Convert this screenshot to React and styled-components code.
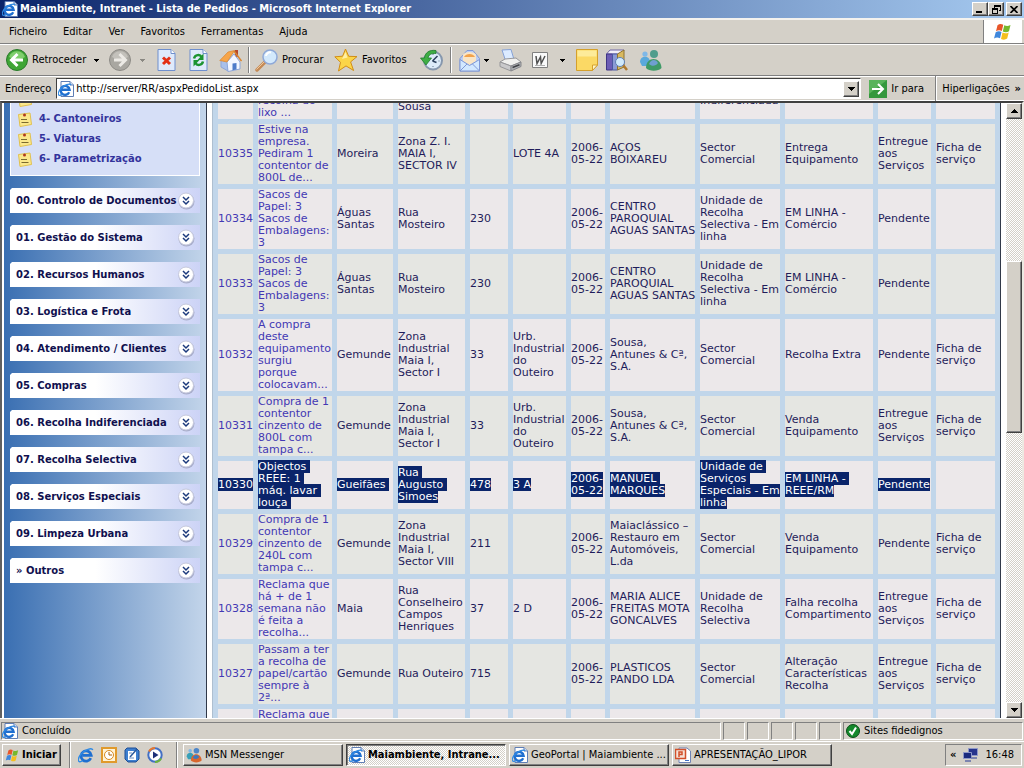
import { useLayoutEffect, useRef } from "react";
import styled, { createGlobalStyle, css } from "styled-components";

const GlobalStyle = createGlobalStyle`
  * {
    box-sizing: border-box;
  }

  body {
    margin: 0;
    background: #d4d0c8;
    color: #000;
    font: 11px/14px "DejaVu Sans Condensed", "DejaVu Sans", sans-serif;
  }

  button,
  input {
    margin: 0;
    padding: 0;
    border: 0;
    background: none;
    color: inherit;
    font: inherit;
  }

  svg {
    display: block;
    flex: none;
  }
`;

const raised = css`
  border: 1px solid;
  border-color: #fff #404040 #404040 #fff;
  box-shadow: inset -1px -1px 0 #808080;
  background: #d4d0c8;
`;

const sunken = css`
  border: 1px solid;
  border-color: #808080 #fff #fff #808080;
`;

const dither = css`
  background: repeating-conic-gradient(#fff 0 25%, #d4d0c8 0 50%) 0 0 / 2px 2px;
`;

const Window = styled.div`
  display: flex;
  flex-direction: column;
  height: 100vh;
  overflow: hidden;
`;

const TitleBar = styled.header`
  flex: none;
  display: flex;
  align-items: center;
  gap: 2px;
  height: 18px;
  padding: 0 2px;
  background: linear-gradient(to right, #0a246a, #a6caf0);
  color: #fff;
`;

const Title = styled.h1`
  flex: 1;
  margin: 0;
  font-size: 11px;
  font-weight: bold;
  white-space: nowrap;
`;

const CaptionButtons = styled.div`
  display: flex;
`;

const CaptionButton = styled.button`
  ${raised}
  display: flex;
  align-items: center;
  justify-content: center;
  width: 16px;
  height: 14px;
  margin-left: ${({ $apart }) => ($apart ? "2px" : "0")};
`;

const MenuBar = styled.nav`
  flex: none;
  display: flex;
  align-items: stretch;
  height: 26px;
  border-top: 2px solid #f4f2ee;
  border-bottom: 1px solid #808080;
  padding-right: 2px;
`;

const MenuItem = styled.button`
  padding: 0 8px;
  white-space: nowrap;
`;

const MenuItems = styled.div`
  flex: 1;
  display: flex;
  padding-left: 1px;
`;

const WindowsLogo = styled.div`
  display: flex;
  align-items: center;
  justify-content: center;
  width: 39px;
  border-left: 1px solid #808080;
  background: #fff;
`;

const Toolbar = styled.div`
  flex: none;
  display: flex;
  align-items: center;
  gap: 3px;
  height: 32px;
  padding-left: 4px;
  border-top: 1px solid #fff;
  border-bottom: 1px solid #808080;
`;

const ToolButton = styled.button`
  flex: none;
  display: flex;
  align-items: center;
  justify-content: ${({ $start }) => ($start ? "flex-start" : "center")};
  gap: ${({ $gap }) => $gap || 4}px;
  width: ${({ $width }) => $width || 29}px;
  height: 28px;
  padding-left: ${({ $start }) => ($start ? "2px" : "0")};
  white-space: nowrap;
`;

const ToolLabel = styled.span`
  padding-right: 4px;
`;

const Separator = styled.div`
  flex: none;
  width: 2px;
  height: 26px;
  border-left: 1px solid #808080;
  border-right: 1px solid #fff;
`;

const AddressBar = styled.form`
  flex: none;
  display: flex;
  align-items: center;
  gap: 5px;
  height: 25px;
  padding: 0 3px 0 5px;
  border-top: 1px solid #fff;
  border-bottom: 1px solid #fff;
`;

const AddressBox = styled.div`
  flex: 1;
  display: flex;
  align-items: center;
  gap: 2px;
  height: 21px;
  padding: 0 1px;
  border: 1px solid;
  border-color: #404040 #fff #fff #404040;
  background: #fff;
`;

const AddressInput = styled.input`
  flex: 1;
  height: 17px;
  outline: none;
`;

const SmallButton = styled.button`
  ${raised}
  flex: none;
  display: flex;
  align-items: center;
  justify-content: center;
  width: 16px;
  height: 16px;
`;

const GoButton = styled.button`
  display: flex;
  align-items: center;
  gap: 4px;
  width: 64px;
  padding-left: 3px;
  white-space: nowrap;
`;

const LinksButton = styled.button`
  display: flex;
  align-items: center;
  gap: 5px;
  white-space: nowrap;
`;

const Overflow = styled.span`
  font-weight: bold;
`;

const Body = styled.div`
  flex: 1;
  min-height: 0;
  display: flex;
  border-top: 2px solid #404040;
  border-left: 2px solid #606060;
  border-right: 2px solid #ece9e2;
`;

const Viewport = styled.div`
  flex: 1;
  min-width: 0;
  display: flex;
  align-items: flex-start;
  overflow: hidden;
  padding: 0 5px 0 2px;
  background: #fff;
`;

const Sidebar = styled.aside`
  flex: none;
  display: flex;
  flex-direction: column;
  align-self: stretch;
  gap: 12px;
  width: 203px;
  min-height: 700px;
  padding: 0 6px;
  border-right: 1px solid #303848;
  background: linear-gradient(to right, #3a6fb2, #c3d5ea);
`;

const SubMenu = styled.ul`
  margin: 0;
  padding: 35px 7px 6px;
  border: 1px solid #fff;
  border-top: 0;
  background: #d6dff7;
  list-style: none;
`;

const SubMenuLink = styled.a`
  display: flex;
  align-items: center;
  gap: 7px;
  height: 20px;
  color: #33339c;
  font: bold 10px/20px "DejaVu Sans", sans-serif;
  text-decoration: none;
  white-space: nowrap;
`;

const MenuGroup = styled.button`
  display: flex;
  align-items: center;
  justify-content: space-between;
  width: 100%;
  height: 25px;
  padding: 0 5px 0 6px;
  background: linear-gradient(to right, #fff 45%, #ccd3f6);
  clip-path: polygon(2px 0, 100% 0, 100% 100%, 0 100%, 0 2px);
  color: #10104e;
  font: bold 10px/12px "DejaVu Sans", sans-serif;
  white-space: nowrap;
`;

const Main = styled.main`
  flex: 1;
  margin-left: 5px;
  border-left: 1px solid #aebfd0;
  border-right: 1px solid #303848;
  background: #c1d6ea;
`;

const OrdersTable = styled.table`
  width: 100%;
  table-layout: fixed;
  border-collapse: separate;
  border-spacing: 5px;
  color: #1f1c5a;
  font: 11px/12px "DejaVu Sans", sans-serif;
`;

const Row = styled.tr`
  background: #ece8ea;

  &:nth-child(even) {
    background: #e5e6e2;
  }
`;

const Cell = styled.td`
  height: 48px;
  padding: 0;
  vertical-align: middle;
  white-space: pre;
`;

const CellLink = styled.a`
  color: #4338b4;
  text-decoration: none;
`;

const Selected = styled.span`
  background: #0a246a;
  color: #fff;
`;

const ScrollBar = styled.div`
  ${dither}
  flex: none;
  display: flex;
  flex-direction: column;
  width: 16px;
`;

const ScrollSpace = styled.div`
  flex: ${({ $share }) => $share};
`;

const ScrollThumb = styled.div`
  ${raised}
  flex: 171;
`;

const StatusBar = styled.footer`
  flex: none;
  display: flex;
  align-items: stretch;
  gap: 2px;
  height: 23px;
  padding: 3px 1px 1px;
  border-top: 1px solid #fff;
`;

const StatusPane = styled.div`
  ${sunken}
  flex: ${({ $grow }) => ($grow ? "1" : "none")};
  display: flex;
  align-items: center;
  gap: 4px;
  width: ${({ $width }) => $width || 22}px;
  padding-left: ${({ $grow }) => ($grow ? "0" : "2px")};
  white-space: nowrap;
`;

const TaskBar = styled.footer`
  flex: none;
  display: flex;
  align-items: center;
  height: 27px;
  padding: 0 2px;
  border-top: 1px solid #fff;
`;

const StartButton = styled.button`
  ${raised}
  display: flex;
  align-items: center;
  gap: 2px;
  width: 59px;
  height: 22px;
  padding-left: 2px;
  font-weight: bold;
`;

const QuickLaunch = styled.div`
  display: flex;
  align-items: center;
  gap: 7px;
  margin: 0 13px 0 8px;
`;

const QuickButton = styled.button`
  width: 16px;
  height: 16px;
`;

const Tasks = styled.div`
  flex: 1;
  display: flex;
  gap: 3px;
  margin-left: 5px;
`;

const TaskButton = styled.button`
  ${raised}
  display: flex;
  align-items: center;
  gap: 3px;
  width: 160px;
  height: 22px;
  padding: 0 2px;
  text-align: left;

  ${({ $active }) =>
    $active &&
    css`
      ${dither}
      border-color: #404040 #fff #fff #404040;
      box-shadow: inset 1px 1px 0 #808080;
      font-weight: bold;
    `}
`;

const TaskLabel = styled.span`
  white-space: nowrap;
`;

const Tray = styled.div`
  ${sunken}
  display: flex;
  align-items: center;
  justify-content: space-between;
  width: 77px;
  height: 22px;
  padding: 0 7px 0 4px;
`;

function Arrow({ up, color = "#000" }) {
  return (
    <svg width="7" height="4" shapeRendering="crispEdges">
      <path
        d={up ? "M3 0h1v1h1v1h1v1h1v1H0V3h1V2h1V1h1z" : "M0 0h7v1H6v1H5v1H4v1H3V3H2V2H1V1H0z"}
        fill={color}
      />
    </svg>
  );
}

function DropArrow({ color = "#000" }) {
  return (
    <svg width="5" height="3" shapeRendering="crispEdges">
      <path d="M0 0h5v1H4v1H3v1H2V2H1V1H0z" fill={color} />
    </svg>
  );
}

function IeGlyph() {
  return (
    <>
      <path
        d="M12.200 10.800A4.500 4.500 0 1 1 12.600 8.300H5"
        fill="none"
        stroke="#1f6fd0"
        strokeWidth="2.400"
      />
      <path
        d="M14 3.600C13 1.200 7 3.300 3.300 7.700.8 10.800.6 14 2.800 13.900c.7 0 1.600-.4 2.300-.9"
        fill="none"
        stroke="#2f8ae4"
        strokeWidth="1.200"
      />
    </>
  );
}

function IePageIcon() {
  return (
    <svg width="16" height="16" viewBox="0 0 16 16">
      <path d="M3 .5h9l3.500 3.500v11.500H3z" fill="#fff" stroke="#5f7eb5" />
      <path d="M12 .5V4h3.500" fill="#cfdcf2" stroke="#5f7eb5" />
      <g transform="translate(-1 .5)">
        <IeGlyph />
      </g>
    </svg>
  );
}

function IeIcon() {
  return (
    <svg width="16" height="16" viewBox="1 1 14 14">
      <IeGlyph />
    </svg>
  );
}

function FlagIcon({ size }) {
  return (
    <svg width={size} height={size} viewBox="0 0 20 20">
      <path d="M4.500 3.200c2-1.600 3.800-1.500 5.800-.4L8.800 9C7 8 5 8 3 9.300z" fill="#e8562a" />
      <path d="M11.300 3.300c2 1 4 1 6.200-.3L16 9.300c-2 1.300-4 1.300-6.200.2z" fill="#77b82c" />
      <path d="M2.700 10.300c2-1.300 4-1.300 5.800-.3L7 16.300c-2-1-4-1-6 .3z" fill="#3f87dc" />
      <path d="M9.500 10.600c2 1 4.200 1 6.200-.2l-1.500 6.200c-2 1.500-4.200 1.400-6.200.4z" fill="#f5bf1e" />
    </svg>
  );
}

function BackIcon() {
  return (
    <svg width="22" height="22" viewBox="0 0 22 22">
      <circle cx="11" cy="11" r="10.500" fill="#3fa535" stroke="#2a7a2a" />
      <path d="M3 8a8.500 8.500 0 0 1 16 0c-5 3-11 3-16 0z" fill="#7fce6d" />
      <path d="M11.500 5 5.500 11l6 6M6 11h11" fill="none" stroke="#fff" strokeWidth="3" />
    </svg>
  );
}

function ForwardIcon() {
  return (
    <svg width="22" height="22" viewBox="0 0 22 22">
      <circle cx="11" cy="11" r="10.500" fill="#a9a7a1" stroke="#8d8b86" />
      <path d="M3 8a8.500 8.500 0 0 1 16 0c-5 3-11 3-16 0z" fill="#c3c1bb" />
      <path d="M10.500 5l6 6-6 6M16 11H5" fill="none" stroke="#eceae5" strokeWidth="3" />
    </svg>
  );
}

function PageShape() {
  return (
    <>
      <path d="M1 .5h13l4 4v17H1z" fill="#dfeafb" stroke="#6f8fce" />
      <path d="M14 .5v4h4" fill="#fff" stroke="#6f8fce" />
    </>
  );
}

function StopIcon() {
  return (
    <svg width="19" height="22" viewBox="0 0 19 22">
      <PageShape />
      <path d="M6 8.500l7 6.500M13 8.500L6 15" stroke="#e33016" strokeWidth="3" />
    </svg>
  );
}

function RefreshIcon() {
  return (
    <svg width="19" height="22" viewBox="0 0 19 22">
      <PageShape />
      <path d="M5 9.500C6 5.500 11 5 12.500 8M14 12.500c-1 4-6 4.500-7.500 1.500" fill="none" stroke="#1d9432" strokeWidth="2.500" />
      <path d="M14.500 4.500V11H8.500zM4.500 17.500V11h6z" fill="#1d9432" />
    </svg>
  );
}

function HomeIcon() {
  return (
    <svg width="23" height="23" viewBox="0 0 23 23">
      <path d="M16 1h3v7h-3z" fill="#b5482d" />
      <path d="M2 11l7 1.500V22l-7-4z" fill="#a9c0ea" stroke="#8ea6d8" />
      <path d="M8 13l7-8 6 8v7l-12 2.500z" fill="#f4f7ff" stroke="#8ea6d8" />
      <path d="M.8 11.500L9 3l6.500-1.500L8 13z" fill="#f7a549" stroke="#d98530" strokeWidth=".7" />
      <path d="M15 2l7.500 10" stroke="#d98530" strokeWidth="1.500" />
      <path d="M13.500 14.500l4-.5v6.500l-4 .8z" fill="#4f7cc9" />
    </svg>
  );
}

function SearchIcon() {
  return (
    <svg width="23" height="23" viewBox="0 0 23 23">
      <path d="M2 21l8-8" stroke="#c58a55" strokeWidth="3.500" strokeLinecap="round" />
      <path d="M1.500 20.500l8-8" stroke="#eec79a" strokeWidth="1" />
      <circle cx="15" cy="8" r="7" fill="#d3e9fc" stroke="#8fa9d8" strokeWidth="1.500" />
      <path d="M11 7a4 4 0 0 1 5-3.500" fill="none" stroke="#fff" strokeWidth="2" />
    </svg>
  );
}

function StarIcon() {
  return (
    <svg width="24" height="24" viewBox="0 0 24 24">
      <path
        d="M11.500 1l3.200 7.300 8.300.3-6.400 5.300 3 8.600-7.600-4.600L4.500 23l2-8.700L.8 8.800l7.800-.6z"
        fill="#fbd548"
        stroke="#d18d17"
        strokeLinejoin="round"
      />
      <path d="M11.500 4l2 5.500L8 11z" fill="#fff0a6" />
    </svg>
  );
}

function HistoryIcon() {
  return (
    <svg width="23" height="22" viewBox="0 0 23 22">
      <circle cx="13" cy="11.500" r="9" fill="#dcebf9" stroke="#8697ad" strokeWidth="2" />
      <path d="M13 5v1M19.500 12h-1M13 18v-1" stroke="#64788f" />
      <path d="M12.500 12l5-5M12.500 12l4 1.500" stroke="#2a3f5c" strokeWidth="1.500" />
      <path d="M16 1.500C9 .5 5 4 4.500 9H.5L6 16l5.500-7H8c.5-3 3-5 8-4.500z" fill="#3fae45" stroke="#227c30" strokeWidth=".8" />
    </svg>
  );
}

function MailIcon() {
  return (
    <svg width="21" height="23" viewBox="0 0 21 23">
      <path d="M1 9.500L8 1.500h6l6.500 8V22H1z" fill="#b9cdf5" stroke="#8098d4" />
      <path d="M4 12V5.500C6 2 15 2 17 5.500V12l-6.500 4z" fill="#f9e5c6" />
      <path d="M5 8c2-4 9-4 11 0z" fill="#f2a24b" />
      <path d="M1 10.500l9.500 6 10-6V22H1z" fill="#d2e8ff" stroke="#8098d4" />
      <path d="M1 22l7-7M20.500 22l-7-7" stroke="#8098d4" />
    </svg>
  );
}

function PrinterIcon() {
  return (
    <svg width="23" height="23" viewBox="0 0 23 23">
      <path d="M3 1l9-.5 3 10-8.500 1z" fill="#dcebff" stroke="#86a2d6" />
      <path d="M1 13l5-3 11-1 5 4-10 4z" fill="#f0f0ee" stroke="#97979a" />
      <path d="M1 13l11 4v5L1 17.500z" fill="#c9c9cb" stroke="#97979a" />
      <path d="M12 17l10-4v4.500L12 22z" fill="#aeb0b4" stroke="#85868a" />
      <path d="M13.500 18.500l7-2.800" stroke="#3f4146" strokeWidth="1.500" />
    </svg>
  );
}

function WordIcon() {
  return (
    <svg width="16" height="16" viewBox="0 0 16 16">
      <path d="M.5.5h15v15H.5z" fill="#fafafa" stroke="#808080" />
      <path d="M4 4l1 7.500L8.500 5l.7 6.500L13 4" fill="none" stroke="#505050" strokeWidth="1.500" />
      <path d="M3 13.500h10" stroke="#b0b0b0" />
    </svg>
  );
}

function NoteIcon() {
  return (
    <svg width="22" height="22" viewBox="0 0 22 22">
      <path d="M.5.500h21V16l-5 5.500H.5z" fill="#fbd965" stroke="#d4a02c" />
      <path d="M1.500 1.500h19v6h-19z" fill="#fdeb9a" />
      <path d="M21.500 16h-5v5.500z" fill="#fff6c8" stroke="#d4a02c" />
    </svg>
  );
}

function BooksIcon() {
  return (
    <svg width="22" height="22" viewBox="0 0 22 22">
      <path d="M.5 5L4 1h14l-2 4z" fill="#f2f0fa" stroke="#7068a8" />
      <path d="M.5 5h6v16h-6z" fill="#6c5db5" stroke="#3f3585" />
      <path d="M6.500 5h5v16h-5z" fill="#8b9bd6" stroke="#4a58a0" />
      <path d="M11.500 5L18 1v17l-6.500 3z" fill="#d9b95f" stroke="#8e7330" />
      <path d="M17 16l4 5" stroke="#b07a2e" strokeWidth="2.500" />
      <circle cx="14" cy="13" r="4.500" fill="#cfe9fb" stroke="#5f7fb4" />
    </svg>
  );
}

function MessengerIcon({ small }) {
  return (
    <svg width={small ? 16 : 23} height={small ? 16 : 22} viewBox="0 0 23 22">
      <circle cx="6" cy="5" r="2.600" fill="#7fb8e8" />
      <path d="M1 13c0-7 10-7 10 0v4H3z" fill={small ? "#38a0b8" : "#5aa9dc"} />
      <circle cx="15" cy="5" r="4" fill={small ? "#4d86c9" : "#4f9d8c"} />
      <path d="M7 19c0-12 15-12 15.500 0-3 3.500-12.500 3.500-15.500 0z" fill={small ? "#d9672e" : "#3f9a67"} />
      <path d="M10 15c2-5 7-5 9-1-2 3-6 4-9 1z" fill={small ? "#3c78c0" : "#6f9fd0"} />
    </svg>
  );
}

function GoIcon() {
  return (
    <svg width="18" height="18" viewBox="0 0 18 18">
      <path d="M0 0h18v18H0z" fill="#35983d" />
      <path d="M0 0h18L0 14z" fill="#58b35a" />
      <path d="M9 4l5 5-5 5M13.500 9H3" fill="none" stroke="#fff" strokeWidth="2" />
    </svg>
  );
}

function ClipNoteIcon() {
  return (
    <svg width="14" height="15" viewBox="0 0 14 15">
      <path d="M.5 2.500L12 1l1.500 11.500L2 14.500z" fill="#fbe88c" stroke="#e0c050" />
      <path d="M3 7.500h6M3.500 10.500h7" stroke="#7a6a30" />
      <circle cx="6.500" cy="3" r="1.500" fill="#b0391f" />
    </svg>
  );
}

function ExpandIcon() {
  return (
    <svg width="18" height="18" viewBox="0 0 18 18">
      <circle cx="9.500" cy="9.500" r="8" fill="#a9aecb" />
      <circle cx="9" cy="8.500" r="7.500" fill="#fff" stroke="#c6c9dd" />
      <path d="M6 5l3 3 3-3M6 9l3 3 3-3" fill="none" stroke="#1c3a7c" strokeWidth="1.500" />
    </svg>
  );
}

function CheckIcon() {
  return (
    <svg width="14" height="14" viewBox="0 0 14 14">
      <circle cx="7" cy="7" r="6.500" fill="#14892c" stroke="#0b4d18" />
      <path d="M3.500 7l2.500 3 4-6.500" fill="none" stroke="#fff" strokeWidth="2" />
    </svg>
  );
}

function ClockIcon() {
  return (
    <svg width="16" height="16" viewBox="0 0 16 16">
      <path d="M1 1h14v14H1z" fill="#fff3d6" stroke="#e09a2c" strokeWidth="2" />
      <circle cx="8" cy="8" r="4.500" fill="#fff" stroke="#d98a1e" />
      <path d="M8 5v3h3" fill="none" stroke="#a8620c" />
    </svg>
  );
}

function DesktopIcon() {
  return (
    <svg width="16" height="16" viewBox="0 0 16 16">
      <path d="M1 3l2-2h9l3 3v8l-3 3H4l-3-3z" fill="#3d7fd0" stroke="#1f4f94" />
      <path d="M4 4h8v9H4z" fill="#fff" />
      <path d="M6 10l7-8" stroke="#2c5a9c" strokeWidth="1.500" />
      <path d="M5 6h3M5 11h5" stroke="#6e8fc0" />
    </svg>
  );
}

function MediaIcon() {
  return (
    <svg width="16" height="16" viewBox="0 0 16 16">
      <circle cx="8" cy="8" r="6.700" fill="#fff" stroke="#4370c4" strokeWidth="2" />
      <path d="M2 4.500A7 7 0 0 1 8 1" fill="none" stroke="#e8772c" strokeWidth="2" />
      <path d="M14 11.500A7 7 0 0 1 8 15" fill="none" stroke="#6cb33c" strokeWidth="2" />
      <path d="M6 4.500L11.500 8 6 11.500z" fill="#1c2f78" />
    </svg>
  );
}

function SlidesIcon() {
  return (
    <svg width="16" height="16" viewBox="0 0 16 16">
      <path d="M4 1h8l3.500 3v11.500H4z" fill="#fff" stroke="#6f83b5" />
      <path d="M.5 2.500h10v9H.5z" fill="#f6e3d8" stroke="#d2502a" strokeWidth="1.500" />
      <path d="M4 10V5h3v2.500H4" fill="none" stroke="#d2502a" strokeWidth="1.500" />
      <path d="M10 13.500h4" stroke="#4370c4" />
    </svg>
  );
}

function NetworkIcon() {
  return (
    <svg width="15" height="15" viewBox="0 0 15 15">
      <path d="M5.500.5h9v7h-9z" fill="#26348c" stroke="#8f98c8" />
      <path d="M.5 4.500h8v6h-8z" fill="#1b2a7e" stroke="#8f98c8" />
      <path d="M2 13h6M8 10h6" stroke="#7b84b0" strokeWidth="2" />
    </svg>
  );
}

const menus = ["Ficheiro", "Editar", "Ver", "Favoritos", "Ferramentas", "Ajuda"];

const subMenu = ["", "4- Cantoneiros", "5- Viaturas", "6- Parametrização"];

const menuGroups = [
  "00. Controlo de Documentos",
  "01. Gestão do Sistema",
  "02. Recursos Humanos",
  "03. Logística e Frota",
  "04. Atendimento / Clientes",
  "05. Compras",
  "06. Recolha Indiferenciada",
  "07. Recolha Selectiva",
  "08. Serviços Especiais",
  "09. Limpeza Urbana",
  "» Outros",
];

// the last column takes what the window leaves over
const columnWidths = [35, 74, 56, 67, 38, 53, 34, 85, 80, 88, 53];

const date = "2006-\n05-22";
const file = "Ficha de\nserviço";
const delivered = "Entregue\naos\nServiços";
const commercial = "Sector\nComercial";
const online = "Unidade de\nRecolha\nSelectiva - Em\nlinha";

const orders = [
  ["", "\n\n\nrecolha do\nlixo ...", "", "\n\n\nSousa", "", "", "", "", "\n\nIndiferenciada", "", "", ""],
  ["10335", "Estive na\nempresa.\nPediram 1\ncontentor de\n800L de...", "Moreira", "Zona Z. I.\nMAIA I,\nSECTOR IV", "", "LOTE 4A", date, "AÇOS\nBOIXAREU", commercial, "Entrega\nEquipamento", delivered, file],
  ["10334", "Sacos de\nPapel: 3\nSacos de\nEmbalagens:\n3", "Águas\nSantas", "Rua\nMosteiro", "230", "", date, "CENTRO\nPAROQUIAL\nAGUAS SANTAS", online, "EM LINHA -\nComércio", "Pendente", ""],
  ["10333", "Sacos de\nPapel: 3\nSacos de\nEmbalagens:\n3", "Águas\nSantas", "Rua\nMosteiro", "230", "", date, "CENTRO\nPAROQUIAL\nAGUAS SANTAS", online, "EM LINHA -\nComércio", "Pendente", ""],
  ["10332", "A compra\ndeste\nequipamento\nsurgiu\nporque\ncolocavam...", "Gemunde", "Zona\nIndustrial\nMaia I,\nSector I", "33", "Urb.\nIndustrial\ndo\nOuteiro", date, "Sousa,\nAntunes & Cª,\nS.A.", commercial, "Recolha Extra", "Pendente", file],
  ["10331", "Compra de 1\ncontentor\ncinzento de\n800L com\ntampa c...", "Gemunde", "Zona\nIndustrial\nMaia I,\nSector I", "33", "Urb.\nIndustrial\ndo\nOuteiro", date, "Sousa,\nAntunes & Cª,\nS.A.", commercial, "Venda\nEquipamento", delivered, file],
  ["10330", "Objectos \nREEE: 1 \nmáq. lavar \nlouça ", "Gueifães ", "Rua \nAugusto \nSimoes", "478", "3 A", date, "MANUEL \nMARQUES", "Unidade de \nServiços \nEspeciais - Em\nlinha", "EM LINHA - \nREEE/RM", "Pendente", ""],
  ["10329", "Compra de 1\ncontentor\ncinzento de\n240L com\ntampa c...", "Gemunde", "Zona\nIndustrial\nMaia I,\nSector VIII", "211", "", date, "Maiaclássico –\nRestauro em\nAutomóveis,\nL.da", commercial, "Venda\nEquipamento", "Pendente", file],
  ["10328", "Reclama que\nhá + de 1\nsemana não\né feita a\nrecolha...", "Maia", "Rua\nConselheiro\nCampos\nHenriques", "37", "2 D", date, "MARIA ALICE\nFREITAS MOTA\nGONCALVES", "Unidade de\nRecolha\nSelectiva", "Falha recolha\nCompartimento", delivered, file],
  ["10327", "Passam a ter\na recolha de\npapel/cartão\nsempre à\n2ª...", "Gemunde", "Rua Outeiro", "715", "", date, "PLASTICOS\nPANDO LDA", commercial, "Alteração\nCaracterísticas\nRecolha", delivered, file],
  ["", "Reclama que\n\n\n\n", "", "", "", "", "", "", "", "", "", ""],
];

const selectedOrder = "10330";

function CellContent({ text, link, selected }) {
  if (selected) return <Selected>{text}</Selected>;
  if (link && text) return <CellLink href="#">{text}</CellLink>;
  return text;
}

function Orders() {
  return (
    <OrdersTable>
      <colgroup>
        {columnWidths.map((width, index) => (
          <col key={index} width={width} />
        ))}
        <col />
      </colgroup>
      <tbody>
        {orders.map((order, rowIndex) => (
          <Row key={rowIndex}>
            {order.map((text, index) => (
              <Cell key={index}>
                <CellContent
                  text={text}
                  link={index < 2}
                  selected={order[0] === selectedOrder && text !== ""}
                />
              </Cell>
            ))}
          </Row>
        ))}
      </tbody>
    </OrdersTable>
  );
}

export default function App() {
  const viewport = useRef(null);

  useLayoutEffect(() => {
    viewport.current.scrollTop = 49;
  }, []);

  return (
    <>
      <GlobalStyle />
      <Window>
        <TitleBar>
          <IePageIcon />
          <Title>Maiambiente, Intranet - Lista de Pedidos - Microsoft Internet Explorer</Title>
          <CaptionButtons>
            <CaptionButton aria-label="Minimizar">
              <svg width="8" height="8" shapeRendering="crispEdges">
                <path d="M0 6h6v2H0z" />
              </svg>
            </CaptionButton>
            <CaptionButton aria-label="Restaurar">
              <svg width="9" height="9" shapeRendering="crispEdges">
                <path d="M2 0h7v6H7V5h1V2H3v1H2zM0 3h6v6H0zm1 2v3h4V5z" fillRule="evenodd" />
              </svg>
            </CaptionButton>
            <CaptionButton $apart aria-label="Fechar">
              <svg width="8" height="7">
                <path d="M0.500 0l7 7M7.500 0l-7 7" stroke="#000" strokeWidth="1.700" />
              </svg>
            </CaptionButton>
          </CaptionButtons>
        </TitleBar>

        <MenuBar>
          <MenuItems>
            {menus.map((menu) => (
              <MenuItem key={menu}>{menu}</MenuItem>
            ))}
          </MenuItems>
          <WindowsLogo>
            <FlagIcon size={20} />
          </WindowsLogo>
        </MenuBar>

        <Toolbar>
          <ToolButton $width={100} $start>
            <BackIcon />
            <ToolLabel>Retroceder</ToolLabel>
            <DropArrow />
          </ToolButton>
          <ToolButton $width={42} $gap={9} $start aria-label="Avançar">
            <ForwardIcon />
            <DropArrow color="#8a8882" />
          </ToolButton>
          <ToolButton aria-label="Parar">
            <StopIcon />
          </ToolButton>
          <ToolButton aria-label="Actualizar">
            <RefreshIcon />
          </ToolButton>
          <ToolButton aria-label="Página inicial">
            <HomeIcon />
          </ToolButton>
          <Separator />
          <ToolButton $width={76} $start>
            <SearchIcon />
            <ToolLabel>Procurar</ToolLabel>
          </ToolButton>
          <ToolButton $width={80} $start>
            <StarIcon />
            <ToolLabel>Favoritos</ToolLabel>
          </ToolButton>
          <ToolButton $width={32} aria-label="Histórico">
            <HistoryIcon />
          </ToolButton>
          <Separator />
          <ToolButton $width={38} aria-label="Correio">
            <MailIcon />
            <DropArrow />
          </ToolButton>
          <ToolButton $width={28} aria-label="Imprimir">
            <PrinterIcon />
          </ToolButton>
          <ToolButton $width={42} $gap={12} aria-label="Editar">
            <WordIcon />
            <DropArrow />
          </ToolButton>
          <ToolButton aria-label="Notas">
            <NoteIcon />
          </ToolButton>
          <ToolButton $width={26} aria-label="Pesquisar">
            <BooksIcon />
          </ToolButton>
          <ToolButton $width={34} aria-label="Messenger">
            <MessengerIcon />
          </ToolButton>
        </Toolbar>

        <AddressBar onSubmit={(event) => event.preventDefault()}>
          <label htmlFor="address">Endereço</label>
          <AddressBox>
            <IePageIcon />
            <AddressInput id="address" defaultValue="http://server/RR/aspxPedidoList.aspx" />
            <SmallButton type="button" aria-label="Endereços anteriores">
              <Arrow />
            </SmallButton>
          </AddressBox>
          <GoButton>
            <GoIcon />
            Ir para
          </GoButton>
          <Separator />
          <LinksButton type="button">
            Hiperligações
            <Overflow>»</Overflow>
          </LinksButton>
        </AddressBar>

        <Body>
          <Viewport ref={viewport}>
            <Sidebar>
              <SubMenu>
                {subMenu.map((item) => (
                  <li key={item}>
                    <SubMenuLink href="#">
                      <ClipNoteIcon />
                      {item}
                    </SubMenuLink>
                  </li>
                ))}
              </SubMenu>
              {menuGroups.map((group) => (
                <MenuGroup key={group}>
                  {group}
                  <ExpandIcon />
                </MenuGroup>
              ))}
            </Sidebar>
            <Main>
              <Orders />
            </Main>
          </Viewport>
          <ScrollBar>
            <SmallButton aria-label="Subir">
              <Arrow up />
            </SmallButton>
            <ScrollSpace $share={142} />
            <ScrollThumb />
            <ScrollSpace $share={270} />
            <SmallButton aria-label="Descer">
              <Arrow />
            </SmallButton>
          </ScrollBar>
        </Body>

        <StatusBar>
          <StatusPane $grow>
            <IePageIcon />
            Concluído
          </StatusPane>
          <StatusPane />
          <StatusPane />
          <StatusPane />
          <StatusPane />
          <StatusPane />
          <StatusPane $width={180}>
            <CheckIcon />
            Sites fidedignos
          </StatusPane>
        </StatusBar>

        <TaskBar>
          <StartButton>
            <FlagIcon size={15} />
            Iniciar
          </StartButton>
          <QuickLaunch>
            <Separator />
            <QuickButton aria-label="Internet Explorer">
              <IeIcon />
            </QuickButton>
            <QuickButton aria-label="Outlook">
              <ClockIcon />
            </QuickButton>
            <QuickButton aria-label="Ambiente de trabalho">
              <DesktopIcon />
            </QuickButton>
            <QuickButton aria-label="Media Player">
              <MediaIcon />
            </QuickButton>
          </QuickLaunch>
          <Separator />
          <Tasks>
            <TaskButton>
              <MessengerIcon small />
              <TaskLabel>MSN Messenger</TaskLabel>
            </TaskButton>
            <TaskButton $active>
              <IePageIcon />
              <TaskLabel>Maiambiente, Intrane...</TaskLabel>
            </TaskButton>
            <TaskButton>
              <IePageIcon />
              <TaskLabel>GeoPortal | Maiambiente ...</TaskLabel>
            </TaskButton>
            <TaskButton>
              <SlidesIcon />
              <TaskLabel>APRESENTAÇÃO_LIPOR</TaskLabel>
            </TaskButton>
          </Tasks>
          <Tray>
            <Overflow>«</Overflow>
            <NetworkIcon />
            16:48
          </Tray>
        </TaskBar>
      </Window>
    </>
  );
}
